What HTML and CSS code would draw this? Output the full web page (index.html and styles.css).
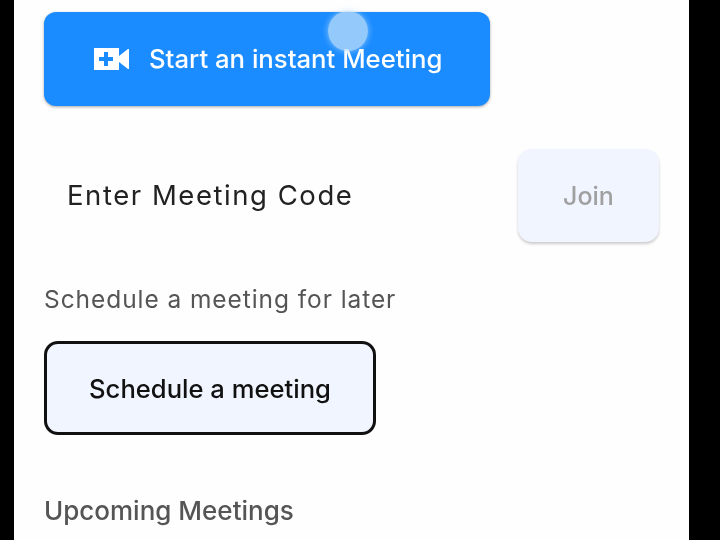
FILE: index.html

```html
<!doctype html>
<html>
<head>
<meta charset="utf-8">
<title>Meetings</title>
<link rel="stylesheet" href="styles.css">
</head>

<body>
    <div class="screen">
        <button class="instant-btn">
            <svg class="video-icon" width="36" height="24" viewBox="0 0 36 24">
                <path fill="#fff" fill-rule="evenodd" d="M0 1h25v22H0zM10 5v5H5v4h5v5h4v-5h5v-4h-5V5z"/>
                <path fill="#fff" d="M25 9l9-7h1v20h-1l-9-7z"/>
            </svg>
            <span class="instant-text">Start an instant Meeting</span>
            <div class="touch-dot"></div>
        </button>
        <div class="join-row">
            <div class="code-label">Enter Meeting Code</div>
            <button class="join-btn">Join</button>
        </div>
        <p class="later">Schedule a meeting for later</p>
        <button class="schedule-btn">Schedule a meeting</button>
        <h2 class="upcoming">Upcoming Meetings</h2>
    </div>
</body>
</html>
```

FILE: styles.css

```css
*{
    padding: 0px;
    margin: 0px;
    box-sizing: border-box;
}
body{
    background-color: #000;
    font-family: Inter, "Liberation Sans", sans-serif;
    overflow: hidden;
}
.screen{
    width: 675px;
    height: 540px;
    margin-left: 14px;
    padding: 12px 30px 0px 30px;
    background-color: #fefefe;
    overflow: hidden;
    filter: blur(0.6px);
}
button{
    font-family: Inter, "Liberation Sans", sans-serif;
}
.instant-btn{
    position: relative;
    width: 446px;
    height: 94px;
    display: flex;
    align-items: center;
    padding-left: 50px;
    gap: 19px;
    border: none;
    border-radius: 12px;
    background-color: #1a8cff;
    box-shadow: 0px 1px 3px rgba(0,0,0,0.35);
    color: #fff;
    font-size: 25.7px;
    font-weight: 500;
}
.instant-text{
    margin-top: -2px;
}
.video-icon{
    flex-shrink: 0;
}
.touch-dot{
    position: absolute;
    top: -1px;
    left: 284px;
    width: 40px;
    height: 40px;
    border-radius: 50%;
    background-color: rgba(190,222,250,0.75);
    box-shadow: 0px 0px 6px rgba(190,222,250,0.7);
}
.join-row{
    display: flex;
    justify-content: space-between;
    align-items: center;
    margin-top: 43px;
}
.code-label{
    margin-left: 23px;
    margin-top: -2px;
    font-size: 27.5px;
    letter-spacing: 1.55px;
    color: #222;
}
.join-btn{
    width: 141px;
    height: 93px;
    border: none;
    border-radius: 14px;
    background-color: #f1f5ff;
    box-shadow: 0px 2px 3px rgba(0,0,0,0.2);
    color: #a0a0a0;
    font-size: 25px;
    font-weight: 500;
}
.later{
    margin-top: 42px;
    font-size: 24.5px;
    letter-spacing: 0.93px;
    color: #555;
}
.schedule-btn{
    display: block;
    width: 332px;
    height: 94px;
    margin-top: 27px;
    border: 3px solid #111;
    border-radius: 14px;
    background-color: #f1f5ff;
    color: #111;
    font-size: 25.6px;
    font-weight: 500;
}
.upcoming{
    margin-top: 60px;
    font-size: 26px;
    font-weight: 500;
    color: #555;
}
```
